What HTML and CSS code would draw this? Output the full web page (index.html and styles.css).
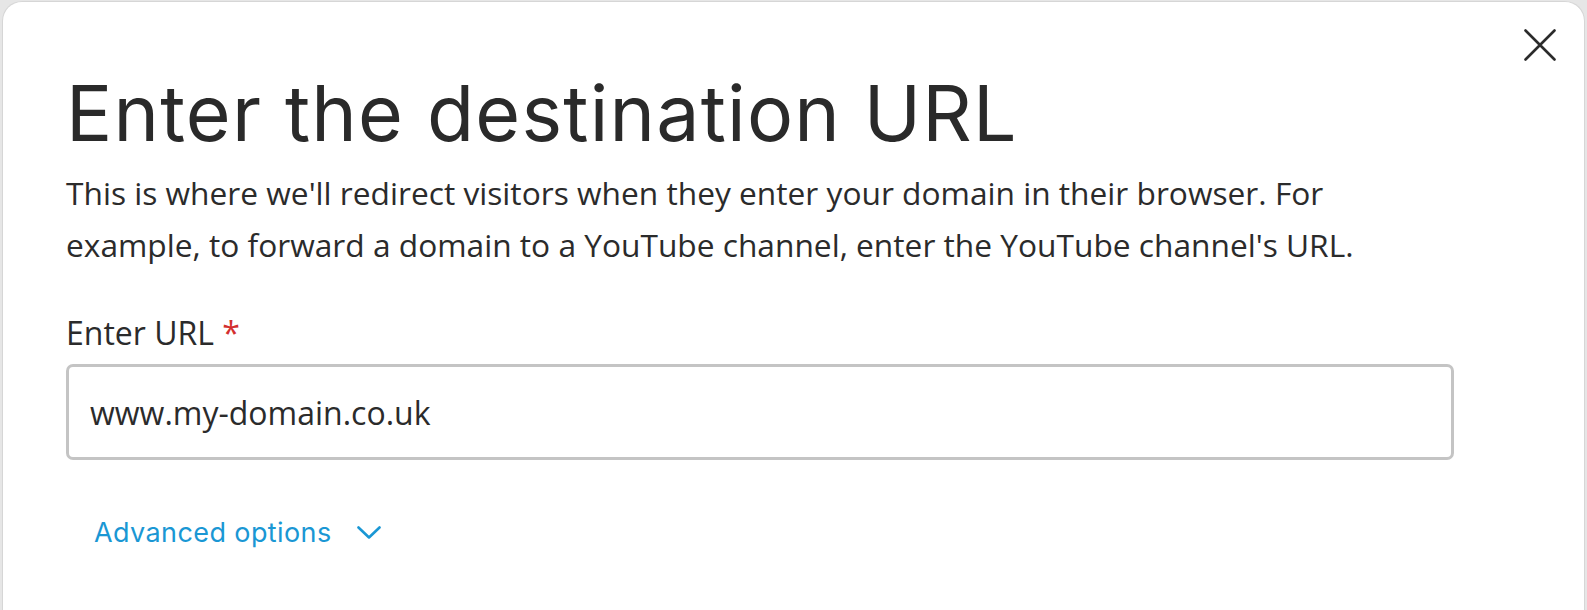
FILE: index.html
```html
<!DOCTYPE html>
<html lang="en">
<head>
    <meta charset="UTF-8">
    <meta name="viewport" content="width=device-width, initial-scale=1.0">
    <title>Domain forwarding</title>
    <link rel="stylesheet" href="styles.css">
</head>
<body>
    <div class="modal">
        <button class="close" aria-label="Close">
            <svg width="32" height="32" viewBox="0 0 32 32">
                <path d="M1.5 1.5 L30.5 30.5 M30.5 1.5 L1.5 30.5" stroke="#2b2b2b" stroke-width="2.6" stroke-linecap="round" fill="none"/>
            </svg>
        </button>

        <h1>Enter the destination URL</h1>
        <p class="intro">This is where we'll redirect visitors when they enter your domain in their browser. For example, to forward a domain to a YouTube channel, enter the YouTube channel's URL.</p>

        <form class="url-form">
            <label for="url">Enter URL <span class="required">*</span></label>
            <input type="text" id="url" value="www.my-domain.co.uk">
        </form>

        <a href="#" class="advanced">
            Advanced options
            <svg width="24" height="13" viewBox="0 0 24 13">
                <path d="M1.5 1.5 L12 11.5 L22.5 1.5" stroke="#1a97d4" stroke-width="2.6" stroke-linecap="round" stroke-linejoin="round" fill="none"/>
            </svg>
        </a>
    </div>
</body>
</html>
```

FILE: styles.css
```css
* {
    box-sizing: border-box;
    margin: 0;
    padding: 0;
}

body {
    font-family: 'Open Sans', sans-serif;
    background-color: #e6e6e6;
    color: #2b2b2b;
    height: 610px;
    overflow: hidden;
}

.modal {
    position: relative;
    margin: 1px 2px 0 2px;
    height: 609px;
    background: white;
    border: 1px solid #d6d6d6;
    border-bottom: none;
    border-radius: 20px 20px 0 0;
    padding: 65px 130px 0 63px;
}

.close {
    position: absolute;
    top: 27px;
    right: 28px;
    border: none;
    background: none;
    cursor: pointer;
    line-height: 0;
}

h1 {
    font-family: 'Inter', sans-serif;
    font-weight: 400;
    font-size: 77px;
    line-height: 92px;
    letter-spacing: 1.2px;
    color: #2a2a2a;
}

.intro {
    margin-top: 8px;
    font-size: 31.7px;
    line-height: 52px;
}

.url-form {
    display: flex;
    flex-direction: column;
    margin-top: 42px;
}

.url-form label {
    font-size: 32px;
    line-height: 40px;
}

.required {
    color: #d32f2f;
}

.url-form input {
    margin-top: 11px;
    height: 96px;
    border: 3px solid #c4c4c4;
    border-radius: 7px;
    padding: 0 21px;
    font-family: 'Open Sans', sans-serif;
    font-size: 32px;
    color: #2b2b2b;
    outline: none;
}

.advanced {
    display: flex;
    align-items: center;
    gap: 25px;
    width: max-content;
    margin-top: 56px;
    margin-left: 28px;
    font-family: 'Inter', sans-serif;
    font-size: 27px;
    letter-spacing: 0.4px;
    color: #1a97d4;
    text-decoration: none;
}
```
